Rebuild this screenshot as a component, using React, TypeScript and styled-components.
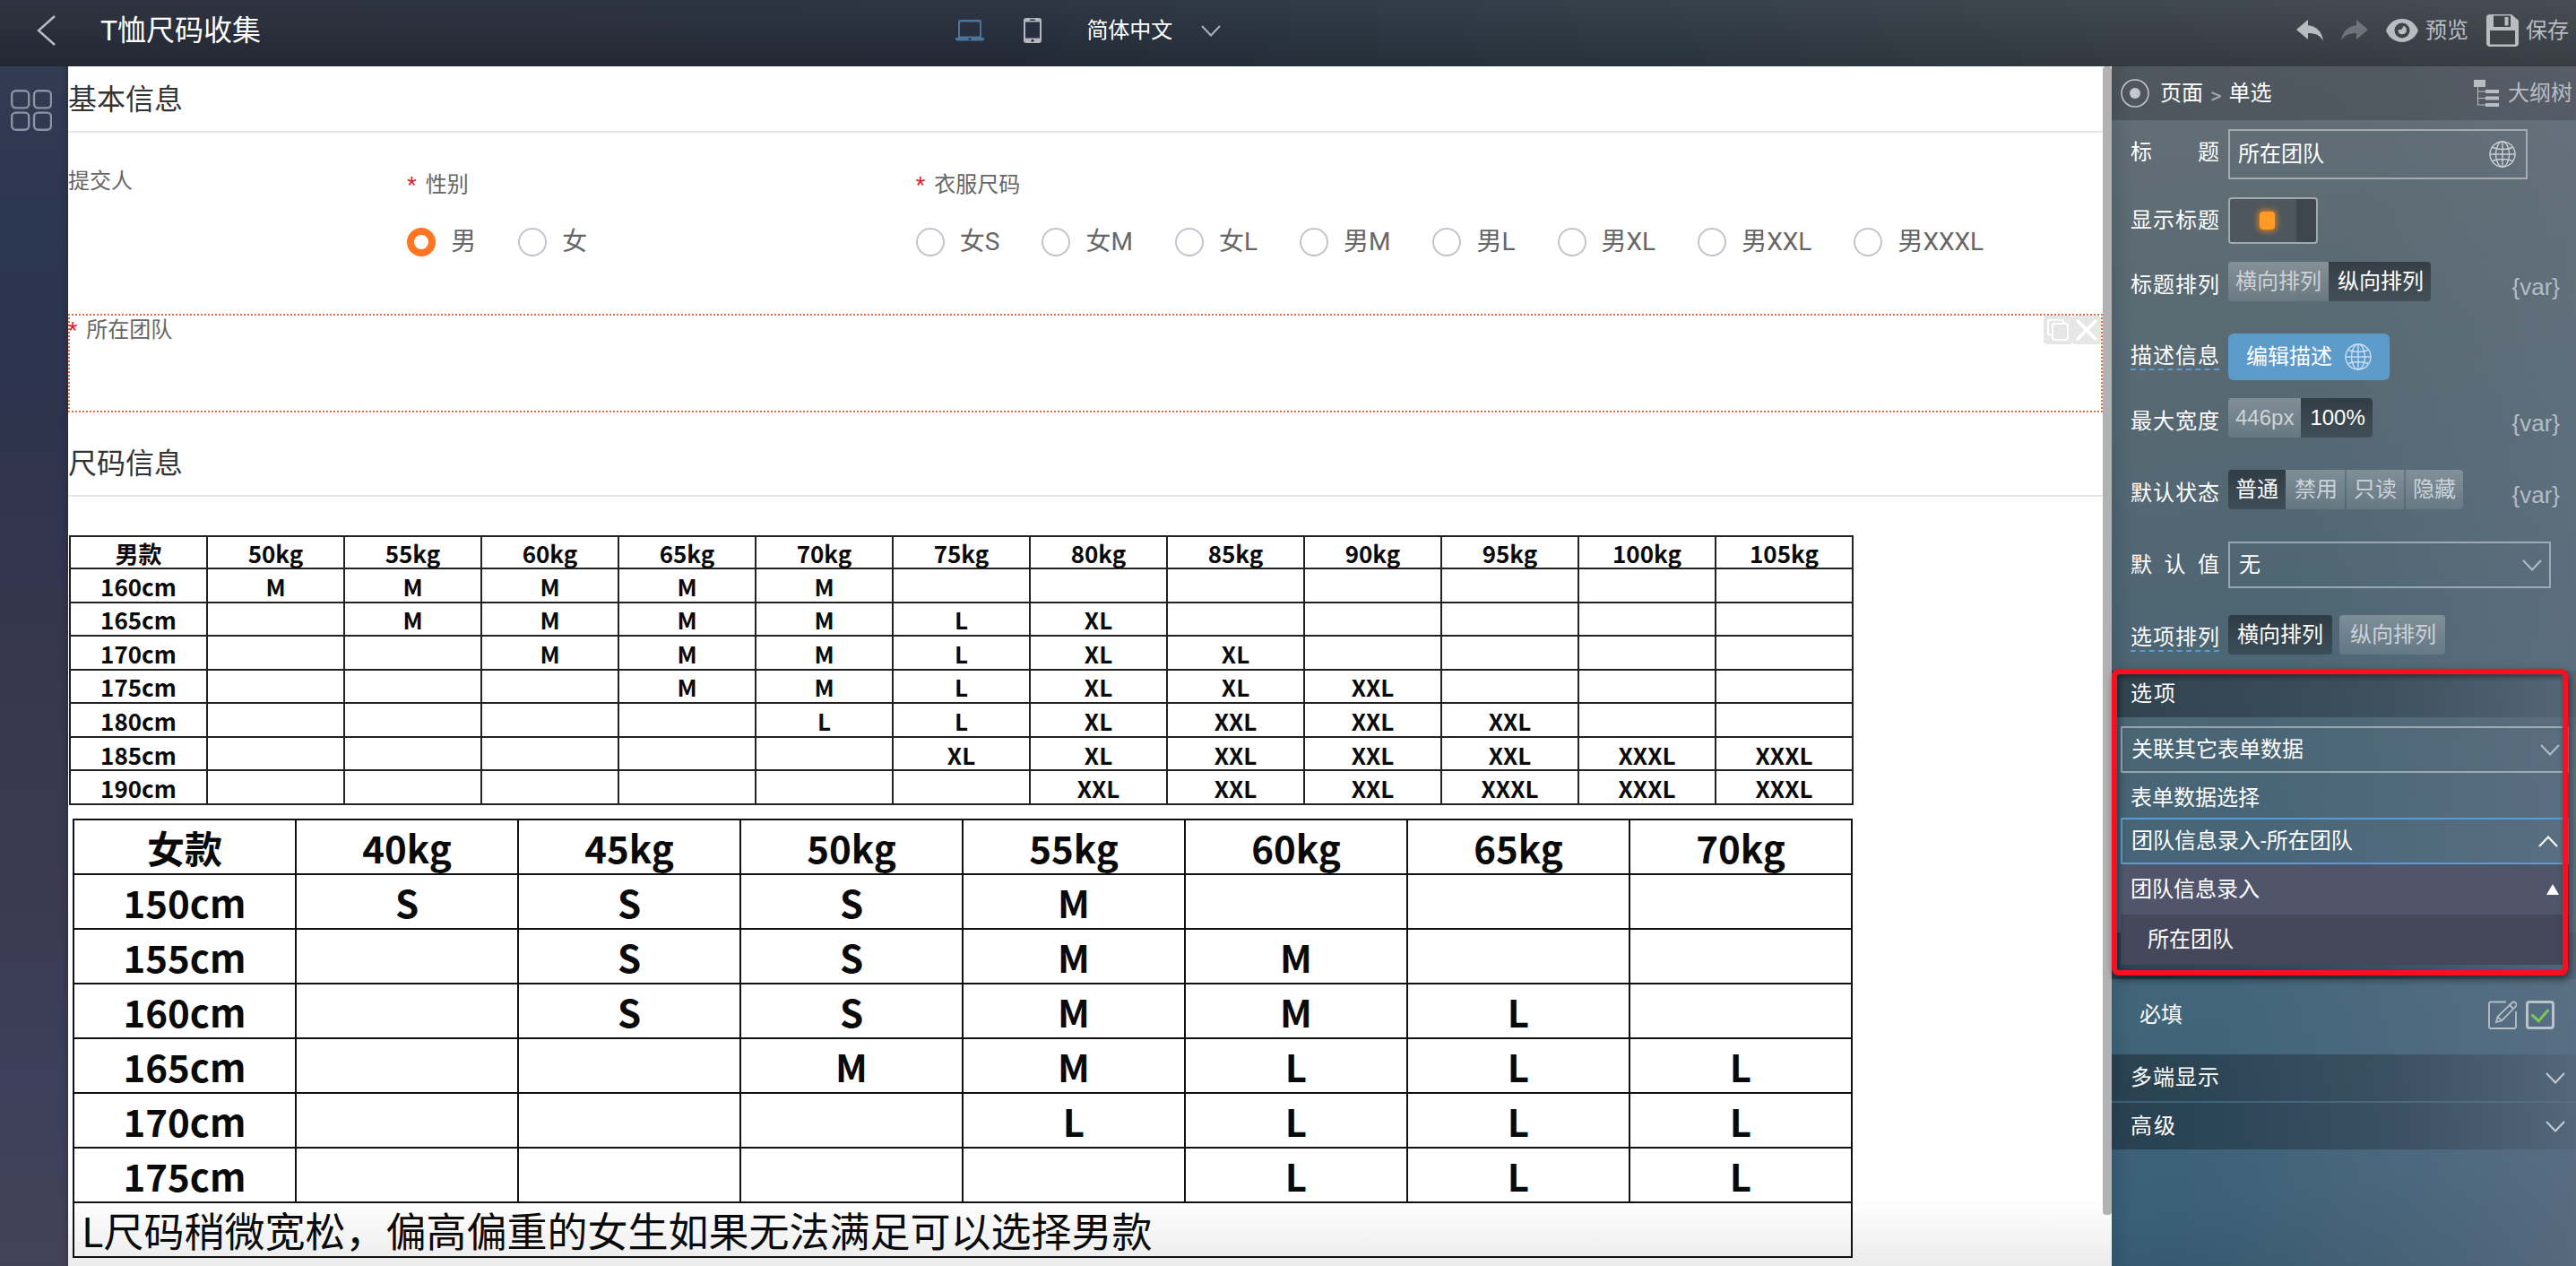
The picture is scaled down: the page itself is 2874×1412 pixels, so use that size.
import React, { useState } from 'react';
import styled, { createGlobalStyle, css } from 'styled-components';

const GlobalStyle = createGlobalStyle`
  * { box-sizing: border-box; }
  body {
    margin: 0;
    font-family: Roboto, "Noto Sans CJK SC", sans-serif;
    font-size: 24px;
    line-height: 28px;
    color: #fff;
    overflow: hidden;
  }
  button, input, select { font: inherit; color: inherit; }
`;

const Page = styled.div`
  display: grid;
  grid-template-rows: 74px minmax(0, 1fr);
  height: 100vh;
`;

/* ---------- header ---------- */

const Header = styled.header`
  display: flex;
  align-items: center;
  padding-bottom: 6px;
  background:
    linear-gradient(180deg, rgba(255, 255, 255, 0.03), rgba(0, 0, 0, 0.14)),
    linear-gradient(90deg, #282e3b 0%, #282f3d 38%, #2b3844 56%, #3a4249 82%, #42474f 100%);
`;

const IconButton = styled.button<{ $faded?: boolean }>`
  display: inline-flex;
  align-items: center;
  gap: 8px;
  padding: 0;
  border: 0;
  background: none;
  color: #b9bcc0;
  opacity: ${(p) => (p.$faded ? 0.4 : 1)};
  cursor: pointer;
  svg { display: block; }
`;

const HeaderLeft = styled.div`
  flex: 0 0 37%;
  display: flex;
  align-items: center;
  gap: 50px;
  padding-left: 40px;
`;

const Title = styled.h1`
  margin: 0;
  font-size: 32px;
  line-height: 48px;
  font-weight: 400;
`;

const HeaderCenter = styled.div`
  flex: 1;
  display: flex;
  align-items: center;
  padding-left: 3px;
`;

const DeviceGroup = styled.div`
  display: flex;
  align-items: center;
  gap: 44px;
  margin-right: 50px;
`;

const LanguageButton = styled(IconButton)`
  gap: 32px;
  color: #fff;
  svg { color: #aeb2b8; }
`;

const HeaderRight = styled.div`
  display: flex;
  align-items: center;
  gap: 20px;
  padding-right: 8px;
`;

/* ---------- body ---------- */

const Body = styled.div`
  display: grid;
  grid-template-columns: 76px minmax(0, 1fr) 518px;
  min-height: 0;
`;

const Rail = styled.nav`
  display: flex;
  flex-direction: column;
  align-items: center;
  padding: 26px 6px 0 0;
  background: linear-gradient(180deg, #323c53 0%, #2b364f 15%, #2f344d 30%, #38384f 55%, #3b3a52 70%, #3c405a 84%, #444259 100%);
  box-shadow: inset -6px 0 6px -4px rgba(0, 0, 0, 0.2);
  ${IconButton} { color: #8d92a3; }
`;

const Canvas = styled.main`
  display: flex;
  min-width: 0;
  background: linear-gradient(180deg, #fff calc(100% - 76px), #ebebeb 100%);
  color: #606266;
`;

const Form = styled.div`
  flex: 1;
  min-width: 0;
  overflow: hidden;
`;

const ScrollTrack = styled.div`
  width: 10px;
`;

const ScrollThumb = styled.div`
  height: calc(100% - 58px);
  border-radius: 4px;
  background: #b2b2b2;
`;

const SectionTitle = styled.h2`
  margin: 0;
  height: 74px;
  padding-top: 2px;
  border-bottom: 2px solid #e6e6e6;
  color: #333;
  font-size: 32px;
  line-height: 70px;
  font-weight: 400;
`;

const FieldRow = styled.div`
  display: grid;
  grid-template-columns: 2fr 3fr 7fr;
  height: 202px;
  padding-top: 40px;
`;

const Field = styled.fieldset`
  margin: 0;
  padding: 0;
  border: 0;
  min-width: 0;
`;

const FieldLabel = styled.legend<{ $low?: boolean }>`
  display: block;
  padding: ${(p) => (p.$low ? 4 : 0)}px 0 0;
  font-size: 24px;
  line-height: 28px;
  color: #666;
`;

const Star = styled.span`
  margin-right: 10px;
  color: #e6192e;
`;

const Options = styled.div`
  display: flex;
  gap: 47px;
  padding-top: 34px;
`;

const Option = styled.label`
  display: flex;
  align-items: center;
  gap: 17px;
  font-size: 28px;
  line-height: 32px;
  color: #666;
  white-space: nowrap;
`;

const Radio = styled.input`
  appearance: none;
  width: 32px;
  height: 32px;
  margin: 0;
  border: 2px solid #c0c4cc;
  border-radius: 50%;
  background: #fff;
  &:checked { border: 8px solid #ff7521; }
`;

const Selected = styled.section`
  display: flex;
  justify-content: space-between;
  align-items: flex-start;
  height: 110px;
  margin-bottom: 20px;
  border: 2px dotted #e0703f;
`;

const SelectedLabel = styled.span`
  margin-left: -2px;
  line-height: 32px;
  color: #666;
`;

const CornerButtons = styled.div`
  display: flex;
`;

const CornerButton = styled.button`
  display: grid;
  place-items: center;
  width: 32px;
  height: 32px;
  padding: 0;
  border: 0;
  border-radius: 4px;
  background: #e6e6e6;
  color: #fff;
`;

const Tables = styled.div`
  padding: 43px 12px 10px 1px;
`;

const SizeTable = styled.table<{ $large?: boolean }>`
  width: 100%;
  table-layout: fixed;
  border-collapse: collapse;
  color: #0a0a0a;
  font-family: "Noto Sans CJK SC", sans-serif;
  font-weight: 700;
  text-align: center;
  th, td { padding: 0; font-weight: inherit; }
  ${(p) =>
    p.$large
      ? css`
          max-width: 1986px;
          margin: 15px 0 0 4px;
          font-size: 42px;
          line-height: 58px;
          tr { height: 61px; }
          th, td { border: 2px solid #111; }
        `
      : css`
          max-width: 1991px;
          height: 301px;
          font-size: 26px;
          line-height: 32px;
          th, td { padding-top: 2px; border: 2px solid #222; }
        `}
`;

const NoteCell = styled.td`
  && {
    padding-left: 8px;
    font-size: 45px;
    font-weight: 400;
    text-align: left;
    white-space: nowrap;
  }
`;

/* ---------- property panel ---------- */

const Panel = styled.aside`
  background:
    linear-gradient(90deg, rgba(20, 40, 60, 0.15) 0, rgba(20, 40, 60, 0) 24px),
    linear-gradient(100deg, rgba(110, 116, 134, 0) 40%, rgba(112, 120, 138, 0.65) 105%),
    linear-gradient(170deg, #656f76 0%, #5b6b73 18%, #4e6673 45%, #41657a 75%, #3a6078 90%, #2f5268 100%);
`;

const Crumbs = styled.div`
  display: flex;
  align-items: center;
  height: 60px;
  padding: 0 4px 0 10px;
  background: linear-gradient(90deg, rgba(40, 42, 48, 0.35), rgba(50, 46, 56, 0.3));
`;

const CrumbLink = styled.a`
  color: #fff;
  text-decoration: none;
  svg { display: block; margin-right: 12px; }
`;

const CrumbSeparator = styled.span`
  margin: 6px 8px 0;
  color: #a9adb3;
`;

const OutlineButton = styled(IconButton)`
  gap: 10px;
  margin-left: auto;
`;

const Rows = styled.div`
  display: flex;
  flex-direction: column;
  gap: 20px;
  padding: 10px 18px 18px 21px;
`;

const Row = styled.div<{ $segments?: boolean; $last?: boolean }>`
  display: flex;
  align-items: flex-start;
  height: ${(p) => (p.$last ? 54 : p.$segments ? 60 : 52)}px;
  padding-top: ${(p) => (p.$last ? 10 : 0)}px;
  &:first-child { height: 56px; }
`;

const RowLabel = styled.label`
  display: flex;
  align-items: center;
  flex: none;
  width: 99px;
  height: 52px;
  margin-right: 10px;
`;

const LabelText = styled.span<{ $hint?: boolean; $short?: boolean }>`
  width: ${(p) => (p.$short ? 50 : 99)}px;
  text-align: justify;
  text-align-last: justify;
  border-bottom: ${(p) => (p.$hint ? '2px dashed #5c9bcf' : '0')};
`;

const line = 'rgba(255, 255, 255, 0.42)';

const TextBox = styled.div`
  display: flex;
  align-items: center;
  width: 334px;
  height: 56px;
  padding: 0 11px 0 9px;
  border: 2px solid ${line};
  color: #c9ced3;
  input {
    flex: 1;
    min-width: 0;
    height: 28px;
    padding: 0;
    border: 0;
    outline: 0;
    background: none;
    color: #fff;
  }
`;

const Switch = styled.input`
  appearance: none;
  display: grid;
  place-items: center;
  width: 100px;
  height: 52px;
  margin: 0;
  border: 2px solid ${line};
  border-radius: 4px;
  background: linear-gradient(90deg, #4d575d 74px, #40464e 74px);
  background-clip: padding-box;
  &::before {
    content: "";
    width: 17px;
    height: 20px;
    margin-right: 14px;
    border-radius: 4px;
    background: #ff9a24;
    box-shadow: 0 0 6px 2px rgba(255, 140, 20, 0.75);
  }
`;

const Segments = styled.div<{ $gap?: boolean }>`
  display: flex;
  gap: ${(p) => (p.$gap ? 8 : 0)}px;
`;

const Segment = styled.button<{ $active?: boolean; $apart?: boolean }>`
  height: 44px;
  padding: 0 ${(p) => (p.$apart ? 10 : 8)}px;
  border: 0;
  font-family: "Liberation Sans", "Noto Sans CJK SC", sans-serif;
  line-height: 42px;
  color: ${(p) => (p.$active ? '#fff' : '#ccd2d7')};
  background: ${(p) =>
    p.$active
      ? 'linear-gradient(180deg, rgba(20, 24, 30, 0.55), rgba(20, 24, 30, 0.32))'
      : 'linear-gradient(180deg, rgba(255, 255, 255, 0.25), rgba(255, 255, 255, 0.1))'};
  ${(p) =>
    p.$apart
      ? css`border-radius: 4px;`
      : css`
          &:first-child { border-radius: 4px 0 0 4px; }
          &:last-child { border-radius: 0 4px 4px 0; }
          & + & { border-left: 2px solid transparent; }
          & + & + & { border-left-color: rgba(60, 80, 92, 0.4); }
        `}
`;

const VarButton = styled.button`
  height: 56px;
  margin-left: auto;
  padding: 0;
  border: 0;
  background: none;
  color: #b4bdc5;
  font-family: "Liberation Sans", sans-serif;
  font-size: 26px;
`;

const PrimaryButton = styled.button`
  display: flex;
  align-items: center;
  gap: 14px;
  height: 52px;
  padding: 0 20px;
  border: 0;
  border-radius: 6px;
  background: #5d9bcb;
  color: #fff;
  svg { color: #c8dff2; }
`;

const SelectBox = styled.div<{ $wide?: boolean }>`
  position: relative;
  flex: 1;
  margin-right: ${(p) => (p.$wide ? 8 : 10)}px;
  margin-left: ${(p) => (p.$wide ? 10 : 0)}px;
  color: #b4bdc5;
  > svg {
    position: absolute;
    right: 10px;
    top: 20px;
    pointer-events: none;
  }
  select {
    appearance: none;
    display: block;
    width: 100%;
    height: 52px;
    padding: 0 48px 0 10px;
    border: 2px solid ${line};
    border-radius: 0;
    outline: 0;
    background: none;
    color: #fff;
  }
`;

const OptionSection = styled.section`
  position: relative;
  padding-bottom: 76px;
`;

const Band = styled.button`
  display: flex;
  align-items: center;
  justify-content: space-between;
  width: 100%;
  height: 52px;
  padding: 0 12px 0 21px;
  border: 0;
  background: linear-gradient(90deg, rgba(10, 16, 22, 0.4) 0%, rgba(20, 26, 34, 0.3) 60%, rgba(40, 40, 60, 0.1) 100%);
  color: #c3ccd4;
  text-align: left;
  & + & { margin-top: 2px; }
  span { color: #fff; }
`;

const Stack = styled.div`
  padding-top: 10px;
`;

const SourceLabel = styled.div`
  padding: 3px 21px 0;
  line-height: 50px;
  height: 50px;
`;

const Combo = styled.div`
  position: relative;
  margin: 0 8px 0 10px;
`;

const ComboButton = styled.button`
  display: flex;
  align-items: center;
  justify-content: space-between;
  width: 100%;
  height: 52px;
  padding: 0 10px;
  border: 2px solid #5c9bcf;
  background: none;
  text-align: left;
`;

const Menu = styled.div`
  position: absolute;
  top: 100%;
  left: 0;
  right: 0;
  z-index: 1;
`;

const MenuItem = styled.button<{ $child?: boolean }>`
  display: flex;
  align-items: center;
  justify-content: space-between;
  width: 100%;
  height: 56px;
  padding: 0 11px 0 ${(p) => (p.$child ? 30 : 11)}px;
  border: 0;
  background: ${(p) => (p.$child ? '#45485b' : '#51556b')};
  text-align: left;
`;

const Highlight = styled.div`
  position: absolute;
  z-index: 2;
  inset: -2px 9px -48px 0;
  border: 6px solid #fb0f1e;
  border-radius: 8px;
  box-shadow: 2px 4px 8px rgba(0, 0, 0, 0.5), inset 2px 3px 6px rgba(0, 0, 0, 0.4);
  pointer-events: none;
`;

const RequiredRow = styled.div`
  display: flex;
  align-items: center;
  gap: 10px;
  height: 84px;
  padding: 0 24px 4px 31px;
  label { margin-right: auto; }
  ${IconButton} { color: #b5bfc8; }
`;

const Check = styled.input`
  appearance: none;
  width: 32px;
  height: 32px;
  margin: 0;
  border: 3px solid #b9c3cb;
  border-radius: 4px;
  display: grid;
  place-items: center;
  &:checked::before {
    content: "";
    width: 9px;
    height: 15px;
    margin-bottom: 4px;
    border: solid #79c95b;
    border-width: 0 3px 3px 0;
    transform: rotate(42deg);
  }
`;

/* ---------- icons ---------- */

const Chevron = ({ up = false }: { up?: boolean }) => (
  <svg width="22" height="13" viewBox="0 0 22 13" fill="none" stroke="currentColor" strokeWidth="2">
    <path d={up ? 'M1 12 11 1.5 21 12' : 'M1 1 11 11.5 21 1'} />
  </svg>
);

const BackIcon = () => (
  <svg width="22" height="34" viewBox="0 0 22 34" fill="none" stroke="currentColor" strokeWidth="2.4">
    <path d="M21 1 3 17 21 33" />
  </svg>
);

const LaptopIcon = () => (
  <svg width="32" height="24" viewBox="0 0 32 24" fill="#4b749f">
    <path fillRule="evenodd" d="M5 0h22a2 2 0 0 1 2 2v18H3V2a2 2 0 0 1 2-2Zm0 2.5V18.500h22V2.500Z" />
    <path d="M0 20h32v1.500a2 2 0 0 1-2 2H2a2 2 0 0 1-2-2Z" />
    <rect x="14.500" y="20.500" width="3" height="2" fill="#222b3a" />
  </svg>
);

const PhoneIcon = () => (
  <svg width="20" height="28" viewBox="0 0 20 28">
    <rect width="20" height="28" rx="3" fill="#b4b7bb" />
    <rect x="2" y="4.500" width="16" height="18" fill="#263040" />
    <rect x="7" y="1.500" width="6" height="1.500" rx=".7" fill="#263040" />
    <circle cx="10" cy="25.200" r="1.500" fill="#263040" />
  </svg>
);

const UndoIcon = ({ flip = false }: { flip?: boolean }) => (
  <svg width="30" height="24" viewBox="0 0 30 24" fill="currentColor">
    <path
      transform={flip ? 'matrix(-1 0 0 1 30 0)' : undefined}
      d="M13 0v6.200c9 .8 15.500 6.500 17 17.300-3.800-6.300-9-8.400-17-8.400V22L0 11Z"
    />
  </svg>
);

const EyeIcon = () => (
  <svg width="36" height="26" viewBox="0 0 36 26" fill="currentColor">
    <path
      fillRule="evenodd"
      d="M18 0C10 0 4 4.500 .6 11.400a3.500 3.500 0 0 0 0 3.200C4 21.500 10 26 18 26s14-4.500 17.400-11.400a3.500 3.500 0 0 0 0-3.200C32 4.500 26 0 18 0Zm0 4.500a8.500 8.500 0 1 1 0 17 8.500 8.500 0 0 1 0-17Z"
    />
    <path d="M19 8c0 3-1.500 4-5.500 4.500A4.700 4.700 0 1 0 19 8Z" />
  </svg>
);

const SaveIcon = () => (
  <svg width="36" height="36" viewBox="0 0 36 36">
    <path d="M4 0h24l8 7v25a4 4 0 0 1-4 4H4a4 4 0 0 1-4-4V4a4 4 0 0 1 4-4Z" fill="currentColor" />
    <path d="M8 1.500h19V14H8Z" fill="#3e434a" />
    <rect x="20.500" y="3" width="4" height="9.500" fill="currentColor" />
    <rect x="4" y="18" width="28" height="15.500" fill="#3e434a" />
  </svg>
);

const GridIcon = () => (
  <svg width="46" height="46" viewBox="0 0 46 46" fill="none" stroke="currentColor" strokeWidth="2.400">
    {[1.2, 26].map((x) =>
      [1.2, 25.6].map((y) => <rect key={`${x}-${y}`} x={x} y={y} width="19" height="19.200" rx="4.500" />),
    )}
  </svg>
);

const CopyIcon = () => (
  <svg width="24" height="24" viewBox="0 0 24 24" fill="none" stroke="currentColor" strokeWidth="2">
    <path d="M5 17.500H3a2 2 0 0 1-2-2V2.500a2 2 0 0 1 2-2h13a2 2 0 0 1 2 2V4" />
    <rect x="6" y="5" width="17" height="18" rx="2" />
  </svg>
);

const CloseIcon = () => (
  <svg width="24" height="24" viewBox="0 0 24 24" stroke="currentColor" strokeWidth="3.500" strokeLinecap="round">
    <path d="m2 2 20 20M22 2 2 22" />
  </svg>
);

const TargetIcon = () => (
  <svg width="32" height="32" viewBox="0 0 32 32" fill="none" stroke="#c4c7cb">
    <circle cx="16" cy="16" r="15" strokeWidth="1.500" />
    <circle cx="16" cy="16" r="6" fill="#c4c7cb" stroke="none" />
  </svg>
);

const TreeIcon = () => (
  <svg width="28" height="30" viewBox="0 0 28 30" fill="currentColor">
    <rect width="13" height="8" />
    <rect x="13" y="11" width="15" height="4" />
    <rect x="13" y="18.500" width="15" height="4" />
    <rect x="13" y="26" width="15" height="4" />
    <path d="M4.500 8v20H13M4.500 13H13M4.500 20.500H13" fill="none" stroke="currentColor" />
  </svg>
);

const GlobeIcon = () => (
  <svg width="30" height="30" viewBox="0 0 30 30" fill="none" stroke="currentColor" strokeWidth="1.400">
    <circle cx="15" cy="15" r="14" />
    <path d="M1 15h28M15 1v28M4 7.500c6 2.700 16 2.700 22 0M4 22.500c6-2.700 16-2.700 22 0" />
    <ellipse cx="15" cy="15" rx="7.500" ry="14" />
  </svg>
);

const EditIcon = () => (
  <svg width="32" height="32" viewBox="0 0 32 32" fill="none" stroke="currentColor" strokeWidth="1.800">
    <path d="M20 1.500H3a2 2 0 0 0-2 2V29a2 2 0 0 0 2 2h26a2 2 0 0 0 2-2V12" />
    <path d="m9 24 1.500-6L26.500 2.500a2.500 2.500 0 0 1 4.200 4L15 22.500ZM10.500 18l4.500 4.500M24 5l4.500 4.500" />
  </svg>
);

const TriangleUp = () => (
  <svg width="14" height="12" viewBox="0 0 14 12" fill="#fff">
    <path d="M7 0 14 12H0Z" />
  </svg>
);

/* ---------- data ---------- */

const menSizes = [
  ['男款', '50kg', '55kg', '60kg', '65kg', '70kg', '75kg', '80kg', '85kg', '90kg', '95kg', '100kg', '105kg'],
  ['160cm', 'M', 'M', 'M', 'M', 'M', '', '', '', '', '', '', ''],
  ['165cm', '', 'M', 'M', 'M', 'M', 'L', 'XL', '', '', '', '', ''],
  ['170cm', '', '', 'M', 'M', 'M', 'L', 'XL', 'XL', '', '', '', ''],
  ['175cm', '', '', '', 'M', 'M', 'L', 'XL', 'XL', 'XXL', '', '', ''],
  ['180cm', '', '', '', '', 'L', 'L', 'XL', 'XXL', 'XXL', 'XXL', '', ''],
  ['185cm', '', '', '', '', '', 'XL', 'XL', 'XXL', 'XXL', 'XXL', 'XXXL', 'XXXL'],
  ['190cm', '', '', '', '', '', '', 'XXL', 'XXL', 'XXL', 'XXXL', 'XXXL', 'XXXL'],
];

const womenSizes = [
  ['女款', '40kg', '45kg', '50kg', '55kg', '60kg', '65kg', '70kg'],
  ['150cm', 'S', 'S', 'S', 'M', '', '', ''],
  ['155cm', '', 'S', 'S', 'M', 'M', '', ''],
  ['160cm', '', 'S', 'S', 'M', 'M', 'L', ''],
  ['165cm', '', '', 'M', 'M', 'L', 'L', 'L'],
  ['170cm', '', '', '', 'L', 'L', 'L', 'L'],
  ['175cm', '', '', '', '', 'L', 'L', 'L'],
];

const shirtSizes = ['女S', '女M', '女L', '男M', '男L', '男XL', '男XXL', '男XXXL'];

/* ---------- parts ---------- */

function Sizes({ rows, large, note }: { rows: string[][]; large?: boolean; note?: string }) {
  const [head, ...body] = rows;
  return (
    <SizeTable $large={large}>
      <thead>
        <tr>{head.map((h) => <th key={h} scope="col">{h}</th>)}</tr>
      </thead>
      <tbody>
        {body.map(([height, ...cells]) => (
          <tr key={height}>
            <th scope="row">{height}</th>
            {cells.map((c, i) => <td key={i}>{c}</td>)}
          </tr>
        ))}
        {note && <tr><NoteCell colSpan={head.length}>{note}</NoteCell></tr>}
      </tbody>
    </SizeTable>
  );
}

function RadioField({ name, label, options, initial }: { name: string; label: string; options: string[]; initial?: string }) {
  const [value, setValue] = useState(initial);
  return (
    <Field>
      <FieldLabel $low><Star>*</Star>{label}</FieldLabel>
      <Options>
        {options.map((o) => (
          <Option key={o}>
            <Radio type="radio" name={name} checked={value === o} onChange={() => setValue(o)} />
            {o}
          </Option>
        ))}
      </Options>
    </Field>
  );
}

function SegmentRow({ label, options, initial, hint, apart, last, variable }: {
  label: string; options: string[]; initial: string; hint?: boolean; apart?: boolean; last?: boolean; variable?: boolean;
}) {
  const [value, setValue] = useState(initial);
  return (
    <Row $segments $last={last}>
      <RowLabel as="div"><LabelText $hint={hint}>{label}</LabelText></RowLabel>
      <Segments $gap={apart} role="group" aria-label={label}>
        {options.map((o) => (
          <Segment key={o} $apart={apart} $active={o === value} onClick={() => setValue(o)}>{o}</Segment>
        ))}
      </Segments>
      {variable && <VarButton>{'{var}'}</VarButton>}
    </Row>
  );
}

export default function App() {
  const [title, setTitle] = useState('所在团队');
  return (
    <Page>
      <GlobalStyle />
      <Header>
        <HeaderLeft>
          <IconButton aria-label="返回"><BackIcon /></IconButton>
          <Title>T恤尺码收集</Title>
        </HeaderLeft>
        <HeaderCenter>
          <DeviceGroup>
            <IconButton aria-label="电脑"><LaptopIcon /></IconButton>
            <IconButton aria-label="手机"><PhoneIcon /></IconButton>
          </DeviceGroup>
          <LanguageButton>简体中文<Chevron /></LanguageButton>
        </HeaderCenter>
        <HeaderRight>
          <IconButton aria-label="撤销"><UndoIcon /></IconButton>
          <IconButton aria-label="重做" $faded><UndoIcon flip /></IconButton>
          <IconButton><EyeIcon />预览</IconButton>
          <IconButton><SaveIcon />保存</IconButton>
        </HeaderRight>
      </Header>
      <Body>
        <Rail>
          <IconButton aria-label="组件"><GridIcon /></IconButton>
        </Rail>
        <Canvas>
          <Form>
            <SectionTitle>基本信息</SectionTitle>
            <FieldRow>
              <Field><FieldLabel>提交人</FieldLabel></Field>
              <RadioField name="gender" label="性别" options={['男', '女']} initial="男" />
              <RadioField name="size" label="衣服尺码" options={shirtSizes} />
            </FieldRow>
            <Selected>
              <SelectedLabel><Star>*</Star>所在团队</SelectedLabel>
              <CornerButtons>
                <CornerButton aria-label="复制"><CopyIcon /></CornerButton>
                <CornerButton aria-label="删除"><CloseIcon /></CornerButton>
              </CornerButtons>
            </Selected>
            <SectionTitle>尺码信息</SectionTitle>
            <Tables>
              <Sizes rows={menSizes} />
              <Sizes rows={womenSizes} large note="L尺码稍微宽松，偏高偏重的女生如果无法满足可以选择男款" />
            </Tables>
          </Form>
          <ScrollTrack><ScrollThumb /></ScrollTrack>
        </Canvas>
        <Panel>
          <Crumbs>
            <CrumbLink href="#root" aria-label="根"><TargetIcon /></CrumbLink>
            <CrumbLink href="#page">页面</CrumbLink>
            <CrumbSeparator>&gt;</CrumbSeparator>
            <CrumbLink href="#radio">单选</CrumbLink>
            <OutlineButton><TreeIcon />大纲树</OutlineButton>
          </Crumbs>
          <Rows>
            <Row>
              <RowLabel htmlFor="title"><LabelText>标题</LabelText></RowLabel>
              <TextBox>
                <input id="title" value={title} onChange={(e) => setTitle(e.target.value)} />
                <GlobeIcon />
              </TextBox>
            </Row>
            <Row>
              <RowLabel htmlFor="show-title"><LabelText>显示标题</LabelText></RowLabel>
              <Switch id="show-title" type="checkbox" role="switch" defaultChecked />
            </Row>
            <SegmentRow label="标题排列" options={['横向排列', '纵向排列']} initial="纵向排列" variable />
            <Row>
              <RowLabel as="div"><LabelText $hint>描述信息</LabelText></RowLabel>
              <PrimaryButton>编辑描述<GlobeIcon /></PrimaryButton>
            </Row>
            <SegmentRow label="最大宽度" options={['446px', '100%']} initial="100%" variable />
            <SegmentRow label="默认状态" options={['普通', '禁用', '只读', '隐藏']} initial="普通" variable />
            <Row>
              <RowLabel htmlFor="default-value"><LabelText>默认值</LabelText></RowLabel>
              <SelectBox>
                <select id="default-value"><option>无</option></select>
                <Chevron />
              </SelectBox>
            </Row>
            <SegmentRow label="选项排列" options={['横向排列', '纵向排列']} initial="横向排列" hint apart last />
          </Rows>
          <OptionSection>
            <Band as="div"><LabelText $short>选项</LabelText></Band>
            <Stack>
              <SelectBox $wide>
                <select aria-label="选项"><option>关联其它表单数据</option></select>
                <Chevron />
              </SelectBox>
              <SourceLabel id="source-label">表单数据选择</SourceLabel>
              <Combo>
                <ComboButton aria-labelledby="source-label" aria-expanded="true">
                  团队信息录入-所在团队<Chevron up />
                </ComboButton>
                <Menu>
                  <MenuItem>团队信息录入<TriangleUp /></MenuItem>
                  <MenuItem $child>所在团队</MenuItem>
                </Menu>
              </Combo>
            </Stack>
            <Highlight />
          </OptionSection>
          <Band as="div" />
          <RequiredRow>
            <label htmlFor="required">必填</label>
            <IconButton aria-label="编辑"><EditIcon /></IconButton>
            <Check id="required" type="checkbox" defaultChecked />
          </RequiredRow>
          <Band><LabelText>多端显示</LabelText><Chevron /></Band>
          <Band><LabelText $short>高级</LabelText><Chevron /></Band>
        </Panel>
      </Body>
    </Page>
  );
}
